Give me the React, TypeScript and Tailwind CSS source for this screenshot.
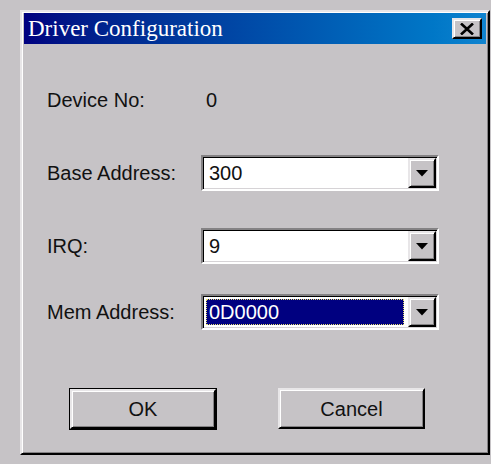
import React from 'react';

// Win9x style 3D edges
const raised =
  'border-2 border-t-[#e8e6e8] border-l-[#e8e6e8] border-r-black border-b-black shadow-[inset_1px_1px_#ffffff,inset_-1px_-1px_#848284]';
const sunken =
  'border-2 border-t-[#848284] border-l-[#848284] border-r-white border-b-white shadow-[inset_1px_1px_#000000,inset_-1px_-1px_#d6d3d6]';

function DropArrow() {
  return (
    <svg width="12" height="7" viewBox="0 0 12 7">
      <path d="M0 0h12L6 6.5z" fill="#000" />
    </svg>
  );
}

function Combo({ value, focused }: { value: string; focused?: boolean }) {
  return (
    <div className={`flex h-[36px] w-[238px] bg-white ${sunken}`}>
      <div className="flex flex-1 items-center p-[3px]">
        {focused ? (
          <div className="flex h-full w-full items-center border border-dotted border-[#e8e070] bg-[#000080] pl-[2px] text-white">
            {value}
          </div>
        ) : (
          <span className="pl-[3px]">{value}</span>
        )}
      </div>
      <div className={`flex w-[28px] items-center justify-center bg-[#c6c3c6] m-[1px] ${raised}`}>
        <DropArrow />
      </div>
    </div>
  );
}

function Row({ label, children, className }: { label: string; children: React.ReactNode; className?: string }) {
  return (
    <div className={`flex items-center ${className ?? ''}`}>
      <span className="w-[154px] shrink-0">{label}</span>
      {children}
    </div>
  );
}

export default function App() {
  return (
    <div
      className="w-[491px] h-[464px] bg-[#c6c3c6] pt-[10px] pl-[20px] text-[20px] text-[#111]"
      style={{ fontFamily: '"Liberation Sans", Arial, sans-serif' }}
    >
      <div className={`flex h-[445px] w-[470px] flex-col bg-[#c6c3c6] px-[2px] pt-px ${raised}`}>
        {/* title bar */}
        <div className="flex h-[31px] items-center justify-between bg-gradient-to-r from-[#000080] to-[#1084d0] pl-[4px] pr-[4px]">
          <span className="text-[23px] leading-none text-white" style={{ fontFamily: '"Liberation Serif", "Times New Roman", serif' }}>
            Driver Configuration
          </span>
          <button className={`flex h-[21px] w-[30px] items-center justify-center bg-[#c6c3c6] ${raised}`}>
            <svg width="14" height="12" viewBox="0 0 14 12">
              <path d="M1 0.5l12 11M13 0.5l-12 11" stroke="#000" strokeWidth="2.6" />
            </svg>
          </button>
        </div>

        <div className="flex flex-col pl-[23px]">
          <Row label="Device No:" className="mt-[38px] h-[36px]">
            <span className="pl-[5px]">0</span>
          </Row>
          <Row label="Base Address:" className="mt-[37px]">
            <Combo value="300" />
          </Row>
          <Row label="IRQ:" className="mt-[37px]">
            <Combo value="9" />
          </Row>
          <Row label="Mem Address:" className="mt-[30px]">
            <Combo value="0D0000" focused />
          </Row>

          <div className="mt-[58px] flex gap-[61px] pl-[22px]">
            <div className="border border-black">
              <button className={`h-[40px] w-[146px] bg-[#c6c3c6] ${raised}`}>OK</button>
            </div>
            <button className={`h-[41px] w-[147px] bg-[#c6c3c6] ${raised}`}>Cancel</button>
          </div>
        </div>
      </div>
    </div>
  );
}
